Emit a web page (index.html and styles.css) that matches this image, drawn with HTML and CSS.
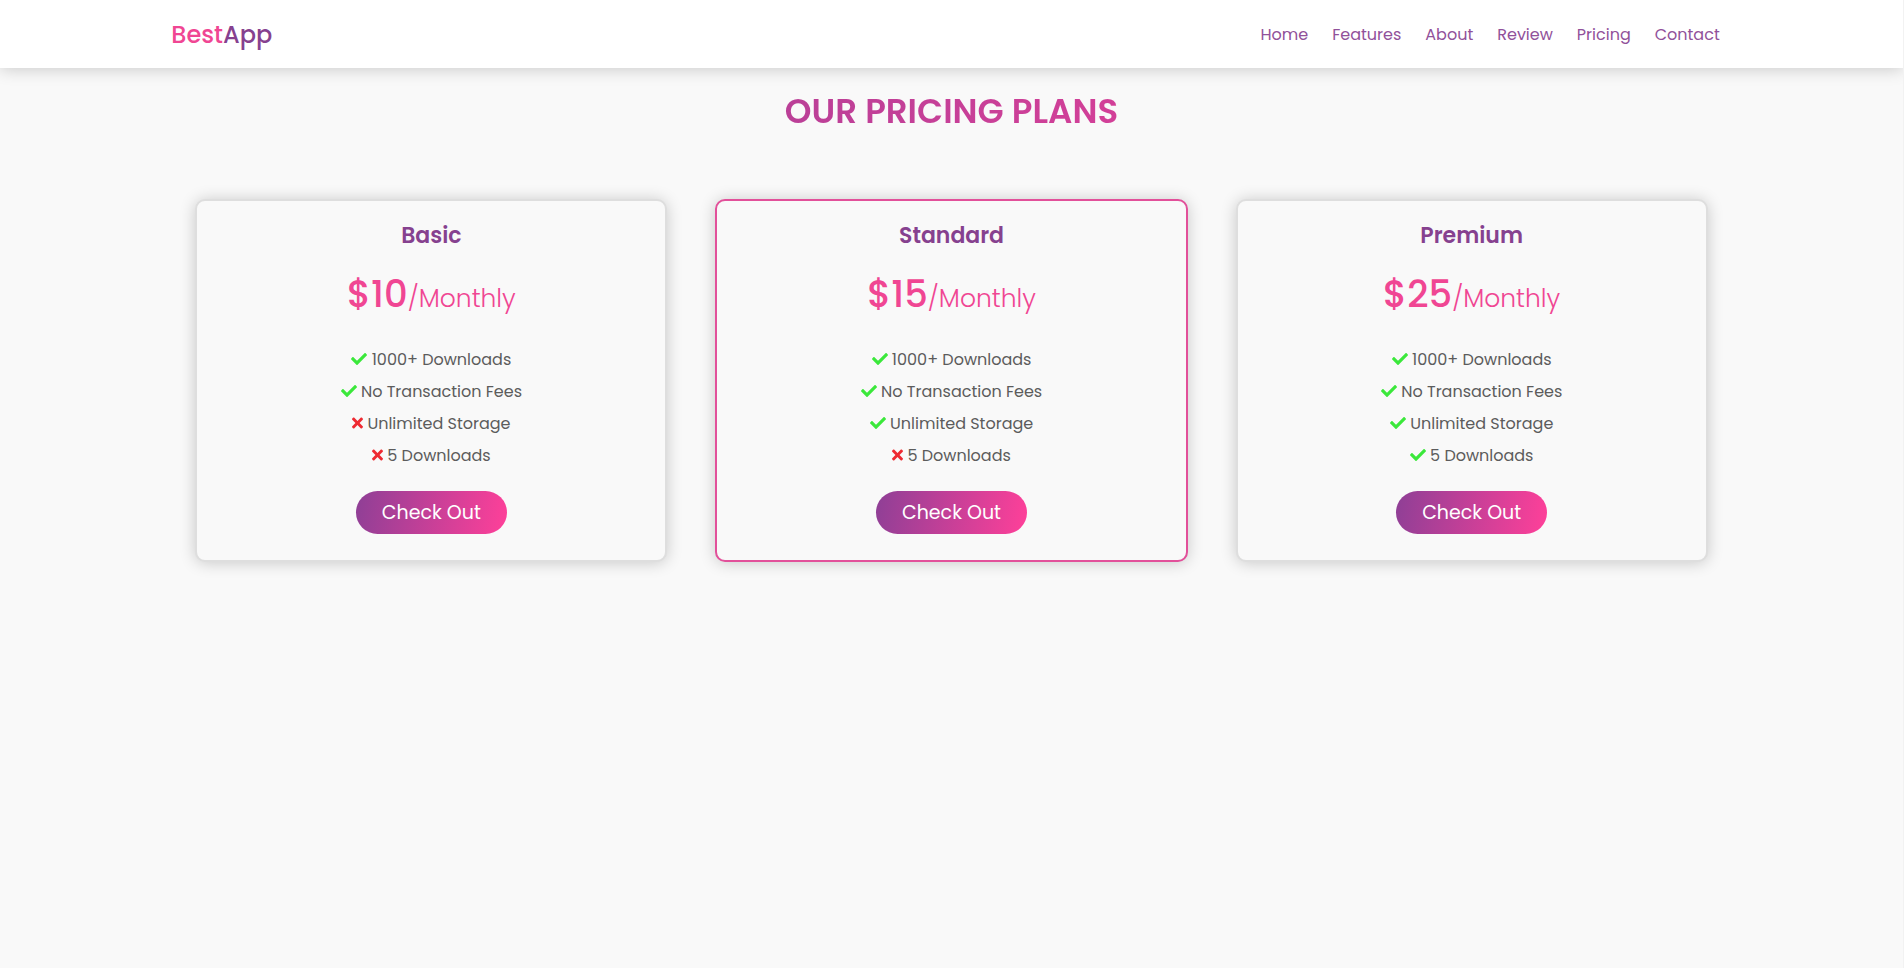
FILE: index.html
```
<!DOCTYPE html>
<html lang="en">
<head>
<meta charset="utf-8">
<meta name="viewport" content="width=device-width, initial-scale=1">
<title>BestApp</title>
<link rel="stylesheet" href="styles.css">
</head>
<body>
<svg class="sprite" aria-hidden="true">
  <symbol id="check" viewBox="0 0 512 512"><path d="M173.898 439.404l-166.4-166.4c-9.997-9.997-9.997-26.206 0-36.204l36.203-36.204c9.997-9.998 26.207-9.998 36.204 0L192 312.69 432.095 72.596c9.997-9.997 26.207-9.997 36.204 0l36.203 36.204c9.997 9.997 9.997 26.206 0 36.204l-294.4 294.401c-9.998 9.997-26.207 9.997-36.204-.001z"/></symbol>
  <symbol id="times" viewBox="0 0 352 512"><path d="M242.72 256l100.07-100.07c12.28-12.28 12.28-32.19 0-44.48l-22.24-22.24c-12.28-12.28-32.19-12.28-44.48 0L176 189.28 75.93 89.21c-12.28-12.28-32.19-12.28-44.48 0L9.21 111.45c-12.28 12.28-12.28 32.19 0 44.48L109.28 256 9.21 356.07c-12.28 12.28-12.28 32.19 0 44.48l22.24 22.24c12.28 12.28 32.2 12.28 44.48 0L176 322.72l100.07 100.07c12.28 12.28 32.2 12.28 44.48 0l22.24-22.24c12.28-12.28 12.28-32.19 0-44.48L242.72 256z"/></symbol>
</svg>
<header class="header">
  <a class="logo" href="#home"><span class="logo-accent">Best</span>App</a>
  <nav class="navbar">
    <a href="#home">Home</a>
    <a href="#features">Features</a>
    <a href="#about">About</a>
    <a href="#review">Review</a>
    <a href="#pricing">Pricing</a>
    <a href="#contact">Contact</a>
  </nav>
</header>
<main class="pricing" id="pricing">
  <h1 class="heading">OUR PRICING PLANS</h1>
  <div class="plans">
    <section class="plan">
      <h2 class="title">Basic</h2>
      <p class="price">$10<span class="period">/Monthly</span></p>
      <ul class="features">
        <li><svg class="icon check"><use href="#check"/></svg> 1000+ Downloads</li>
        <li><svg class="icon check"><use href="#check"/></svg> No Transaction Fees</li>
        <li><svg class="icon times"><use href="#times"/></svg> Unlimited Storage</li>
        <li><svg class="icon times"><use href="#times"/></svg> 5 Downloads</li>
      </ul>
      <button class="btn" type="button">Check Out</button>
    </section>
    <section class="plan featured">
      <h2 class="title">Standard</h2>
      <p class="price">$15<span class="period">/Monthly</span></p>
      <ul class="features">
        <li><svg class="icon check"><use href="#check"/></svg> 1000+ Downloads</li>
        <li><svg class="icon check"><use href="#check"/></svg> No Transaction Fees</li>
        <li><svg class="icon check"><use href="#check"/></svg> Unlimited Storage</li>
        <li><svg class="icon times"><use href="#times"/></svg> 5 Downloads</li>
      </ul>
      <button class="btn" type="button">Check Out</button>
    </section>
    <section class="plan">
      <h2 class="title">Premium</h2>
      <p class="price">$25<span class="period">/Monthly</span></p>
      <ul class="features">
        <li><svg class="icon check"><use href="#check"/></svg> 1000+ Downloads</li>
        <li><svg class="icon check"><use href="#check"/></svg> No Transaction Fees</li>
        <li><svg class="icon check"><use href="#check"/></svg> Unlimited Storage</li>
        <li><svg class="icon check"><use href="#check"/></svg> 5 Downloads</li>
      </ul>
      <button class="btn" type="button">Check Out</button>
    </section>
  </div>
</main>
</body>
</html>
```
FILE: styles.css
```
:root {
  --purple: #86418f;
  --pink: #f04693;
  --gradient: linear-gradient(100deg, #8e3f96, #ff4099);
}

* {
  box-sizing: border-box;
  margin: 0;
  padding: 0;
}

body {
  min-height: 100vh;
  border-right: 1px solid #f2f2f2;
  background: #f9f9f9;
  font-family: Poppins, Inter, sans-serif;
  color: #5c5c5c;
}

a {
  text-decoration: none;
}

.sprite {
  display: none;
}

.header {
  position: sticky;
  top: 0;
  z-index: 1;
  display: flex;
  align-items: center;
  justify-content: space-between;
  padding: 17px 9% 15px;
  background: #fff;
  box-shadow: 0 1px 16px rgba(0, 0, 0, 0.2);
}

.logo {
  color: var(--purple);
  font-size: 24px;
  line-height: 36px;
  font-weight: 500;
}

.logo-accent {
  color: var(--pink);
}

.navbar {
  display: flex;
  gap: 24px;
  padding-right: 12px;
}

.navbar a {
  color: #91519a;
  font-size: 16px;
  line-height: 24px;
}

.pricing {
  padding: 16px 9%;
}

.heading {
  background: var(--gradient);
  background-clip: text;
  -webkit-background-clip: text;
  color: transparent;
  font-size: 34px;
  line-height: 54px;
  font-weight: 600;
  text-align: center;
}

.plans {
  display: grid;
  grid-template-columns: repeat(3, 1fr);
  gap: 48px;
  padding: 61px 24px 24px;
}

.plan {
  padding: 16px;
  border: 2px solid #dedede;
  border-radius: 10px;
  background: #f9f9f9;
  box-shadow: 0 1px 16px rgba(0, 0, 0, 0.2);
  text-align: center;
}

.plan.featured {
  border-color: #e2509a;
}

.title {
  color: var(--purple);
  font-size: 22px;
  line-height: 38px;
  font-weight: 600;
}

.price {
  padding: 12px 0 16px;
  color: var(--pink);
  font-size: 37px;
  line-height: 54px;
  font-weight: 500;
}

.period {
  font-size: 25px;
  font-weight: 300;
}

.features {
  padding: 2px 0 8px;
  list-style: none;
  font-size: 16px;
  line-height: 32px;
}

.icon {
  height: 16px;
  vertical-align: -2px;
}

.check {
  width: 16px;
  fill: #3be83b;
}

.times {
  width: 11px;
  fill: #ee2a32;
}

.btn {
  margin: 11px 0 10px;
  padding: 8px 26px;
  border: 0;
  border-radius: 24px;
  background: var(--gradient);
  color: #fff;
  font: inherit;
  font-size: 19px;
  line-height: 27px;
  cursor: pointer;
}

@media (max-width: 900px) {
  .plans {
    grid-template-columns: 1fr;
  }
}
```
